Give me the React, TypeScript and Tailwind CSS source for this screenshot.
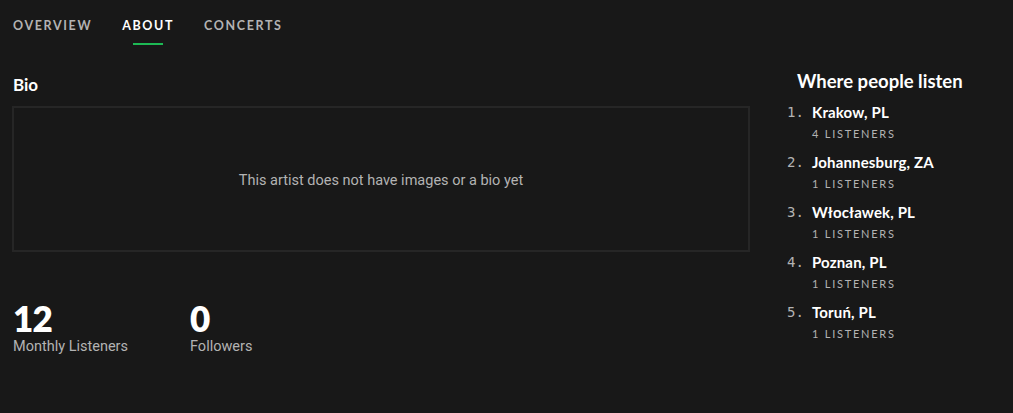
import React from 'react';

const TABS = [
  { label: 'OVERVIEW', active: false },
  { label: 'ABOUT', active: true },
  { label: 'CONCERTS', active: false },
];

const CITIES = [
  { city: 'Krakow, PL', listeners: 4 },
  { city: 'Johannesburg, ZA', listeners: 1 },
  { city: 'Włocławek, PL', listeners: 1 },
  { city: 'Poznan, PL', listeners: 1 },
  { city: 'Toruń, PL', listeners: 1 },
];

const heading = { fontFamily: 'Lato, "Open Sans", sans-serif' };
const body = { fontFamily: 'Roboto, "Liberation Sans", sans-serif' };

export default function App() {
  return (
    <div className="w-[1013px] h-[413px] bg-[#181818] text-white overflow-hidden" style={body}>
      {/* Tabs */}
      <div className="flex gap-[30px] pl-[13px] pt-[18px]" style={heading}>
        {TABS.map((t) => (
          <div key={t.label} className="flex flex-col items-center">
            <span
              className={`text-[12.5px] font-bold tracking-[0.13em] leading-[16px] ${t.active ? 'text-white' : 'text-[#b3b3b3]'}`}
            >
              {t.label}
            </span>
            <span className={`mt-[9px] h-[2px] w-[30px] ${t.active ? 'bg-[#1db954]' : 'bg-transparent'}`} />
          </div>
        ))}
      </div>

      <div className="flex pl-[12px]">
        {/* Left column */}
        <div className="w-[738px] shrink-0">
          <h2 className="mt-[30px] text-[17px] font-bold leading-[20px] pl-[1px]" style={heading}>
            Bio
          </h2>
          <div className="mt-[11px] h-[146px] border-2 border-[#262626] flex items-center justify-center pt-[3px]">
            <p className="text-[14.5px] text-[#b3b3b3]">This artist does not have images or a bio yet</p>
          </div>

          <div className="flex mt-[47px] pl-[1px]">
            <div className="w-[177px]">
              <div className="text-[35px] font-extrabold leading-[38px] tracking-[-0.02em]" style={heading}>12</div>
              <div className="text-[14.5px] text-[#b3b3b3] leading-[18px] mt-[1px]">Monthly Listeners</div>
            </div>
            <div>
              <div className="text-[35px] font-extrabold leading-[38px]" style={heading}>0</div>
              <div className="text-[14.5px] text-[#b3b3b3] leading-[18px] mt-[1px]">Followers</div>
            </div>
          </div>
        </div>

        {/* Right column */}
        <div className="ml-[37px] mt-[24px]">
          <h3 className="pl-[10px] text-[18.5px] font-bold leading-[24px]" style={heading}>
            Where people listen
          </h3>
          <ol className="mt-[9px] flex flex-col">
            {CITIES.map((c, i) => (
              <li key={c.city} className="flex h-[50px]">
                <span
                  className="w-[25px] text-[14px] text-[#b3b3b3] leading-[20px]"
                  style={{ fontFamily: '"DejaVu Sans Mono", "Liberation Mono", monospace' }}
                >
                  {i + 1}.
                </span>
                <div>
                  <div className="text-[15px] font-bold leading-[20px] tracking-[0.01em]" style={heading}>{c.city}</div>
                  <div className="text-[11px] text-[#b3b3b3] tracking-[0.16em] leading-[14px] mt-[5px]" style={heading}>
                    {c.listeners} LISTENERS
                  </div>
                </div>
              </li>
            ))}
          </ol>
        </div>
      </div>
    </div>
  );
}
